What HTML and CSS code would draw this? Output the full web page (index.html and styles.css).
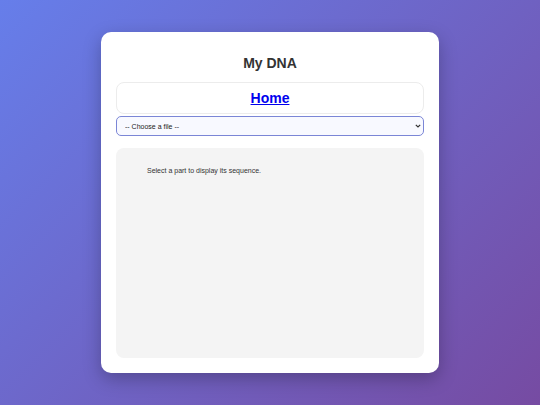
FILE: index.html
```html
<!DOCTYPE html>
<html>
<head>
<meta charset="utf-8">
<link rel="stylesheet" href="styles.css">
</head>
<body>
<div class="card">
  <h1 class="title">My DNA</h1>
  <div class="nav"><a href="#" class="nav-link">Home</a></div>
  <div class="select-wrap">
    <select class="file-select">
      <option>-- Choose a file --</option>
    </select>
    <svg class="select-arrow" width="6" height="4" viewBox="0 0 6 4"><path d="M0.8 0.8 L3 3 L5.2 0.8" fill="none" stroke="#333" stroke-width="1.2"/></svg>
  </div>
  <div class="content">
    <p class="hint">Select a part to display its sequence.</p>
  </div>
</div>
</body>
</html>
```
FILE: styles.css
```css
html, body {
  margin: 0;
  padding: 0;
}
body {
  width: 540px;
  height: 405px;
  background: linear-gradient(135deg, #667eea 0%, #764ba2 100%);
  display: flex;
  align-items: center;
  justify-content: center;
  font-family: "Liberation Sans", Arial, sans-serif;
}
.card {
  box-sizing: border-box;
  width: 338px;
  height: 341px;
  background: #fff;
  border-radius: 10px;
  padding: 15px;
  display: flex;
  flex-direction: column;
  box-shadow: 0 6px 18px rgba(0, 0, 0, 0.25);
}
.title {
  margin: 8px 0 10px;
  font-size: 14px;
  line-height: 17px;
  text-align: center;
  color: #333;
  font-weight: bold;
}
.nav {
  box-sizing: border-box;
  height: 32px;
  border: 1px solid #ececec;
  border-radius: 8px;
  display: flex;
  align-items: center;
  justify-content: center;
}
.nav-link {
  font-size: 14px;
  font-weight: bold;
  color: #0000ee;
  text-decoration: underline;
}
.select-wrap {
  position: relative;
  margin-top: 2px;
  height: 20px;
}
.file-select {
  display: block;
  box-sizing: border-box;
  -webkit-appearance: none;
  appearance: none;
  margin: 0;
  height: 20px;
  width: 100%;
  border: 1px solid #7b86d6;
  border-radius: 5px;
  background: #f8f9ff;
  font-family: "Liberation Sans", Arial, sans-serif;
  font-size: 7px;
  color: #222;
  padding: 0 8px;
  outline: none;
}
.select-arrow {
  position: absolute;
  right: 3px;
  top: 8px;
  pointer-events: none;
}
.content {
  margin-top: 12px;
  flex: 1;
  background: #f4f4f4;
  border-radius: 8px;
  padding: 18px 31px;
}
.hint {
  margin: 0;
  font-size: 7px;
  line-height: 9px;
  color: #333;
}
```
